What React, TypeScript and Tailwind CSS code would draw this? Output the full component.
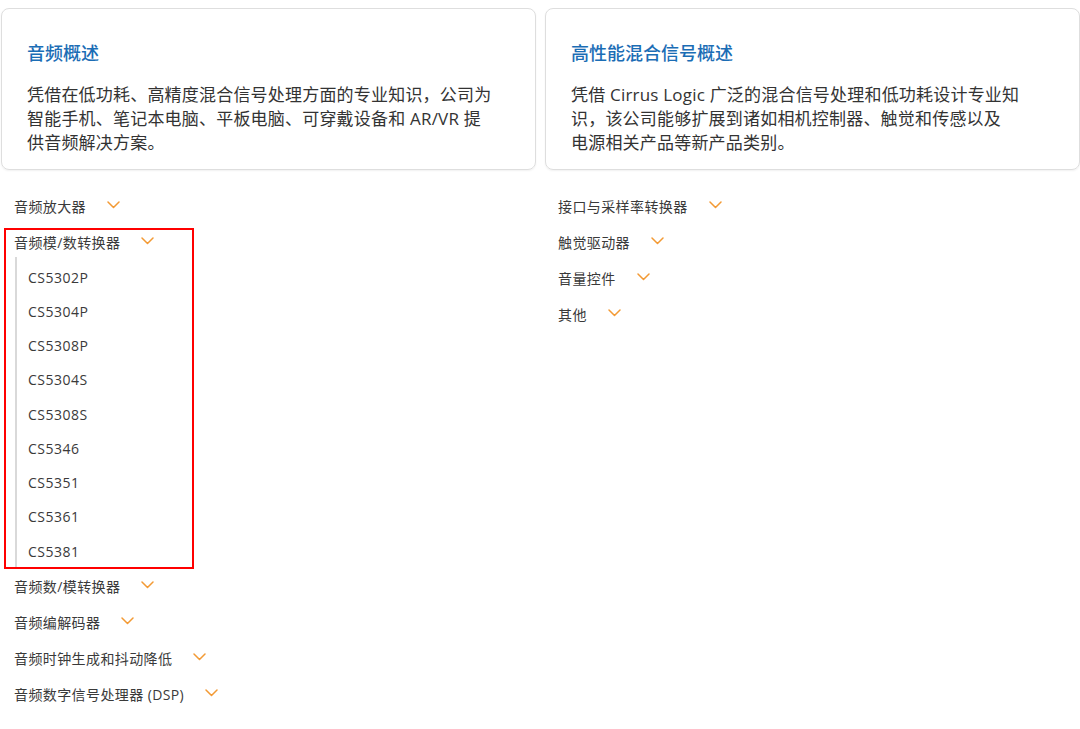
import React from "react";

const cjk = "font-['Open_Sans','Noto_Sans_CJK_SC',sans-serif]";

function Chevron() {
  return (
    <svg width="13" height="8" viewBox="0 0 13 8" className="ml-[21px] -mt-[3px] shrink-0">
      <polyline points="1,1 6.5,6.5 12,1" fill="none" stroke="#f39a35" strokeWidth="1.5" strokeLinecap="round" strokeLinejoin="round" />
    </svg>
  );
}

function Row({ label }: { label: string }) {
  return (
    <div className="flex h-[36px] items-center pl-[13px] text-[14px] tracking-[0.4px] text-[#3a3a3a]">
      <span>{label}</span>
      <Chevron />
    </div>
  );
}

const subs = ["CS5302P", "CS5304P", "CS5308P", "CS5304S", "CS5308S", "CS5346", "CS5351", "CS5361", "CS5381"];

export default function App() {
  return (
    <div className={`w-[1080px] h-[729px] bg-white overflow-hidden pt-[8px] pl-[1px] ${cjk}`}>
      <div className="grid grid-cols-[535px_535px] gap-x-[9px]">
        <div className="h-[162px] rounded-[8px] border border-[#dedede] shadow-[0_1px_2px_rgba(0,0,0,0.06)] pl-[25px] pt-[32px]">
          <div className="text-[18px] leading-[24px] font-medium text-[#1b6db5]">音频概述</div>
          <div className="mt-[18px] text-[17px] leading-[24px] tracking-[0.2px] text-[#333]">
            凭借在低功耗、高精度混合信号处理方面的专业知识，公司为
            <br />
            智能手机、笔记本电脑、平板电脑、可穿戴设备和 AR/VR 提
            <br />
            供音频解决方案。
          </div>
        </div>
        <div className="h-[162px] rounded-[8px] border border-[#dedede] shadow-[0_1px_2px_rgba(0,0,0,0.06)] pl-[25px] pt-[32px]">
          <div className="text-[18px] leading-[24px] font-medium text-[#1b6db5]">高性能混合信号概述</div>
          <div className="mt-[18px] text-[17px] leading-[24px] tracking-[0.2px] text-[#333]">
            凭借 Cirrus Logic 广泛的混合信号处理和低功耗设计专业知
            <br />
            识，该公司能够扩展到诸如相机控制器、触觉和传感以及
            <br />
            电源相关产品等新产品类别。
          </div>
        </div>

        <div className="mt-[18px]">
          <Row label="音频放大器" />
          <div className="relative">
            <Row label="音频模/数转换器" />
            <div className="ml-[14px] -mt-[3px] pt-[3px] border-l-2 border-[#d9d9d9] pl-[11px]">
              {subs.map((s) => (
                <div key={s} className="flex h-[34.25px] items-center text-[14px] tracking-[0.5px] text-[#3a3a3a]">
                  {s}
                </div>
              ))}
            </div>
            <div className="pointer-events-none absolute left-[3px] top-[4px] w-[190px] h-[341px] border-2 border-[#ff0000]" />
          </div>
          <Row label="音频数/模转换器" />
          <Row label="音频编解码器" />
          <Row label="音频时钟生成和抖动降低" />
          <Row label="音频数字信号处理器 (DSP)" />
        </div>

        <div className="mt-[18px]">
          <Row label="接口与采样率转换器" />
          <Row label="触觉驱动器" />
          <Row label="音量控件" />
          <Row label="其他" />
        </div>
      </div>
    </div>
  );
}
